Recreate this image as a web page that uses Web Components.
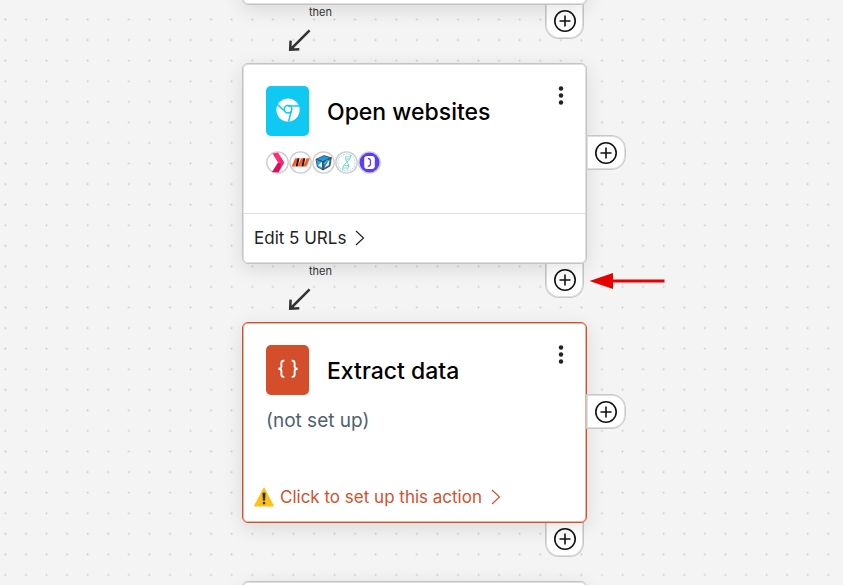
<!DOCTYPE html>
<html lang="en">
<head>
<meta charset="utf-8">
<meta name="viewport" content="width=device-width, initial-scale=1">
<title>Workflow</title>
<style>
  body { margin: 0; font-family: Inter, "Liberation Sans", sans-serif; color: #000; background: #f4f4f4; }
</style>
</head>
<body>
<flow-canvas>
  <step-card blank></step-card>
  <flow-link></flow-link>
  <step-card heading="Open websites" action="Edit 5 URLs" pointed>
    <app-tile slot="tile" kind="browser"></app-tile>
    <site-icon kind="chevron"></site-icon>
    <site-icon kind="stripes"></site-icon>
    <site-icon kind="cube"></site-icon>
    <site-icon kind="helix"></site-icon>
    <site-icon kind="badge"></site-icon>
  </step-card>
  <flow-link></flow-link>
  <step-card heading="Extract data" action="Click to set up this action" alert>
    <app-tile slot="tile" kind="braces"></app-tile>
    <span>(not set up)</span>
  </step-card>
  <flow-link hidden-mark></flow-link>
  <step-card blank></step-card>
</flow-canvas>

<script>
const define = (name, render) => customElements.define(name, class extends HTMLElement {
  connectedCallback() {
    if (this.shadowRoot) return;
    this.attachShadow({ mode: 'open' }).innerHTML = render(this);
  }
});

define('add-tab', el => `
<style>
  :host { display: block; }
  button { box-sizing: border-box; display: flex; align-items: center; justify-content: center;
    margin: 0; padding: 0; background: #fff; border: 1px solid #c8c8c8; box-shadow: inset 0 0 0 1px #dedede; cursor: pointer; color: #111; }
  :host([side="bottom"]) button { width: 39px; height: 35px; border-top: 0; border-radius: 0 0 14px 14px; }
  :host([side="right"]) button { width: 40px; height: 35px; border-radius: 0 14px 14px 0; }
  svg { display: block; }
</style>
<button type="button" aria-label="Add step">
  <svg width="24" height="24" viewBox="0 0 24 24" fill="none" stroke="currentColor">
    <circle cx="12" cy="12" r="10.2" stroke-width="1.6"/>
    <path d="M12 6.5v11M6.5 12h11" stroke-width="1.6"/>
  </svg>
</button>`);

define('app-tile', el => `
<style>
  :host { display: flex; align-items: center; justify-content: center; width: 43px; height: 50px;
    border-radius: 5px; background: #0fc9f2; color: #fff; }
  :host([kind="braces"]) { background: #d44e2c; }
</style>
${el.getAttribute('kind') === 'browser' ? `
<svg width="24" height="26" viewBox="0 0 24 26" aria-hidden="true">
  <circle cx="12" cy="12" r="11.6" fill="#fff"/>
  <g fill="none" stroke="#0fc9f2" stroke-width="1.5">
    <circle cx="12" cy="11.2" r="3.8"/>
    <path d="M12 8h11.5M8.9 13.3L1.2 6.4M15.3 13L12.6 23.5"/>
  </g>
</svg>` : `
<svg width="24" height="24" viewBox="0 0 24 24" fill="none" stroke="#fff" stroke-width="1.9" aria-hidden="true">
  <path d="M8.3 2.7H7.6Q5.4 2.7 5.4 5v3.4Q5.4 10.6 2.4 10.8Q5.4 11 5.4 13.2v3.4q0 2.3 2.2 2.3h.7"/>
  <path d="M15.7 2.7h.7q2.2 0 2.2 2.3v3.4q0 2.2 3 2.4q-3 .2-3 2.4v3.4q0 2.3-2.2 2.3h-.7"/>
</svg>`}`);

const siteArt = {
  chevron: `<path d="M6.5 2.5L12 1.5L18 11.5L12 11.5Z" fill="#ff2d78"/><path d="M12 11.5L18 11.5L12.5 21.5L6 21Z" fill="#d8105c"/><path d="M12 1.6L18 11.5L14.5 17.5V6Z" fill="#ff1f70"/>`,
  stripes: `<path d="M6.2 7.2h3L5.8 15.6H2.6ZM12 7.2h3L11.6 15.6H8.4ZM17.6 7.2h3.3L17.4 15.6H14.2Z" fill="#ff5a26"/><path d="M8.6 7.2h2L8.6 15.6H6.4ZM14.4 7.2h2L14.4 15.6H12.2Z" fill="#26130d"/>`,
  cube: `<path d="M4 8.3L12 4.6L19.3 6.8L11 10.8Z" fill="#1b9be0" stroke="#234" stroke-width=".7"/><path d="M4 8.3L11 10.8V19L5.3 15.8Z" fill="#2aa7e6" stroke="#234" stroke-width=".7"/><path d="M11 10.8L19.3 6.8L18 15L11 19Z" fill="#4a6e88" stroke="#234" stroke-width=".7"/><path d="M6 14.5L10 10.8V16.5ZM12.3 16.5L17.4 8.6L16.7 14.2Z" fill="#e8f7ff"/><path d="M12 13L16 9" stroke="#32b8ef" stroke-width="1.6"/>`,
  helix: `<g fill="none" stroke="#45c9c2" opacity=".8"><circle cx="11.5" cy="11.5" r="8.6" stroke-dasharray="2 .8" stroke-width=".8" opacity=".8"/><path d="M15.5 4C17 10 6 12.5 8 19.5M11 5C9 11 16 12 12.5 18.5" stroke-width="1"/><path d="M12 5.8h3.4M11 8h3.5M9.5 14.5h4M8.3 17h4" stroke-width=".8"/></g>`,
  badge: `<circle cx="11.5" cy="11.5" r="10" fill="#5b3df5"/><rect x="6.2" y="5" width="10.6" height="13" rx="3" fill="#fff"/><path d="M9.8 7.5c3 .3 3.1 2.3 2.5 3.9q1 3.5-2.5 4" fill="none" stroke="#5b3df5" stroke-width="1.3"/>`
};
define('site-icon', el => `
<style>:host { display: block; width: 23px; height: 23px; } svg { display: block; }</style>
<svg width="23" height="23" viewBox="0 0 23 23" aria-hidden="true">
  <circle cx="11.5" cy="11.5" r="10.7" fill="#fff" stroke="#ccc" stroke-width="1.3"/>
  ${siteArt[el.getAttribute('kind')]}
</svg>`);

define('flow-link', el => `
<style>
  :host { display: flex; flex-direction: column; align-items: flex-start; box-sizing: border-box; height: 58px; padding-left: 46px; }
  span { font-size: 11px; line-height: 14px; padding-left: 21px; color: #333; }
  svg { display: block; margin-top: 10px; }
</style>
${el.hasAttribute('hidden-mark') ? '' : `<span>then</span>
<svg width="23" height="23" viewBox="0 0 23 23" fill="none" stroke="#333" stroke-width="2.5" aria-hidden="true">
  <path d="M21.6 1.3L3 20M2.6 11.6L2.2 20.8L11.3 20.3"/>
</svg>`}`);

define('step-card', el => {
  const blank = el.hasAttribute('blank');
  return `
<style>
  :host { display: block; position: relative; height: 201px; --edge: #c4c4c4; --soft: #dedede; --ink: #222; }
  :host([alert]) { --edge: #d44e2c; --soft: #eeb3a3; --ink: #d2502e; }
  article { position: relative; box-sizing: border-box; height: 100%; display: flex; flex-direction: column;
    background: #fff; border: 1px solid var(--edge); border-radius: 6px;
    box-shadow: inset 0 0 0 1px var(--soft), 0 5px 20px rgba(0,0,0,.11); }
  .main { flex: 1; padding: 22px 21px 0 23px; }
  header { display: flex; align-items: center; gap: 18px; }
  h2 { flex: 1; margin: 0; padding-top: 2px; font-size: 23px; line-height: 32px; font-weight: 500; }
  .more { align-self: flex-start; margin: 0; padding: 0; border: 0; background: none; color: #222; cursor: pointer; }
  .more svg { display: block; }
  .detail { display: flex; align-items: center; height: 24px; margin-top: 14px; font-size: 19px; line-height: 24px; color: #526073; }
  footer { box-sizing: border-box; height: 50px; padding: 0 11px 2px; border-top: 1px solid #ddd; display: flex; align-items: center; }
  :host([alert]) footer { border-top-color: transparent; }
  .act { display: flex; align-items: center; gap: 6px; padding: 0; margin: 0; border: 0; background: none;
    font: inherit; font-size: 17px; line-height: 24px; color: var(--ink); cursor: pointer; }
  .act svg { display: block; }
  .act span { padding-right: 2px; }
  add-tab { position: absolute; }
  add-tab[side="bottom"] { right: 3px; top: calc(100% - 1px); }
  add-tab[side="right"] { left: calc(100% - 1px); top: 72px; }
  .pointer { position: absolute; left: calc(100% + 2px); top: calc(100% + 8px); }
</style>
<add-tab side="bottom"></add-tab>
<article>
${blank ? '' : `
  <div class="main">
    <header>
      <slot name="tile"></slot>
      <h2>${el.getAttribute('heading')}</h2>
      <button class="more" type="button" aria-label="More options">
        <svg width="8" height="20" viewBox="0 0 8 20" fill="currentColor"><circle cx="4" cy="2.5" r="2.2"/><circle cx="4" cy="9.5" r="2.2"/><circle cx="4" cy="16.5" r="2.2"/></svg>
      </button>
    </header>
    <div class="detail"><slot></slot></div>
  </div>
  <footer>
    <button class="act" type="button">
      ${el.hasAttribute('alert') ? `<svg width="20" height="20" viewBox="0 0 20 20" aria-hidden="true"><path d="M10 1.2L19.2 18.8H.8Z" fill="#fcc21b" stroke="#fcc21b" stroke-width="1.4" stroke-linejoin="round"/><path d="M8.7 6.2q1.3-1 2.6 0L10.8 13.4H9.2Z" fill="#2f2f2f" stroke="#2f2f2f" stroke-width=".5"/><circle cx="10" cy="16.1" r="1.3" fill="#2f2f2f"/></svg>` : ''}
      <span>${el.getAttribute('action')}</span>
      <svg width="12" height="16" viewBox="0 0 12 16" fill="none" stroke="currentColor" stroke-width="1.2" aria-hidden="true"><path d="M2 1L9.5 8L2 15"/></svg>
    </button>
  </footer>`}
</article>
${blank ? '' : '<add-tab side="right"></add-tab>'}
${el.hasAttribute('pointed') ? `<svg class="pointer" width="78" height="18" viewBox="0 0 78 18" fill="#e60000" aria-hidden="true"><path d="M.5 9L24 1V17Z"/><path d="M23 7.6H75.5V10.4H23Z"/></svg>` : ''}`;
});

define('flow-canvas', el => `
<style>
  :host { display: flex; justify-content: center; align-items: flex-start; position: relative; box-sizing: border-box;
    height: 100vh; overflow: hidden; padding-right: 14px; background: #f4f4f4; }
  .grid { position: absolute; inset: 0; width: 100%; height: 100%; }
  .column { position: relative; flex: none; width: min(345px, 90vw); margin-top: -196px; }
</style>
<svg class="grid" aria-hidden="true">
  <defs>
    <pattern id="dots" width="20" height="20" patternUnits="userSpaceOnUse" patternTransform="translate(5.4 19.5) scale(1.0286) translate(-10 -10)">
      <circle cx="10" cy="10" r=".9" fill="#c8c8c8"/>
    </pattern>
  </defs>
  <rect width="100%" height="100%" fill="url(#dots)"/>
</svg>
<div class="column"><slot></slot></div>`);
</script>
</body>
</html>
